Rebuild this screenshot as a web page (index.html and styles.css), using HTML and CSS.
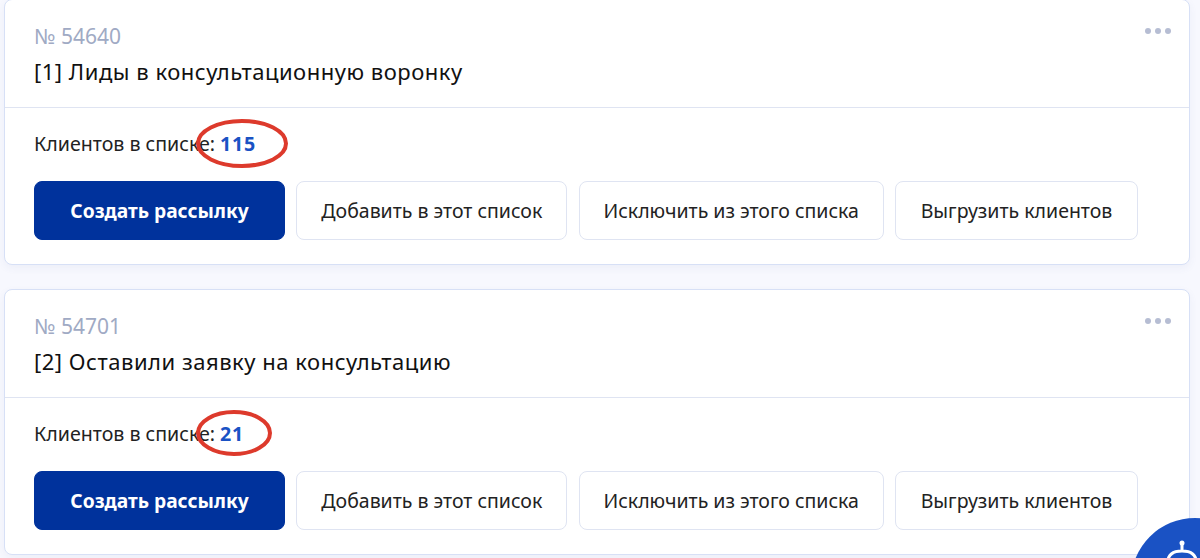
FILE: index.html
```html
<!DOCTYPE html>
<html lang="ru">
<head>
  <meta charset="UTF-8">
  <meta name="viewport" content="width=device-width, initial-scale=1.0">
  <title>Списки клиентов</title>
  <link rel="stylesheet" href="styles.css">
</head>
<body>
  <div class="list">
    <div class="card">
      <div class="card-head">
        <div class="card-num">№ 54640</div>
        <div class="card-title">[1] Лиды в консультационную воронку</div>
        <div class="dots"><i></i><i></i><i></i></div>
      </div>
      <div class="card-body">
        <div class="count">Клиентов в списке: <b>115</b>
          <svg class="circle circle-wide" viewBox="0 0 92 49"><ellipse cx="46" cy="24.5" rx="44" ry="22.5"/></svg>
        </div>
        <div class="actions">
          <a class="btn btn-main">Создать рассылку</a>
          <a class="btn btn-add">Добавить в этот список</a>
          <a class="btn btn-excl">Исключить из этого списка</a>
          <a class="btn btn-exp">Выгрузить клиентов</a>
        </div>
      </div>
    </div>

    <div class="card">
      <div class="card-head">
        <div class="card-num">№ 54701</div>
        <div class="card-title">[2] Оставили заявку на консультацию</div>
        <div class="dots"><i></i><i></i><i></i></div>
      </div>
      <div class="card-body">
        <div class="count">Клиентов в списке: <b>21</b>
          <svg class="circle circle-narrow" viewBox="0 0 76 46"><ellipse cx="38" cy="23" rx="36" ry="21"/></svg>
        </div>
        <div class="actions">
          <a class="btn btn-main">Создать рассылку</a>
          <a class="btn btn-add">Добавить в этот список</a>
          <a class="btn btn-excl">Исключить из этого списка</a>
          <a class="btn btn-exp">Выгрузить клиентов</a>
        </div>
      </div>
    </div>
  </div>

  <div class="bot">
    <svg viewBox="0 0 40 24" width="40" height="24"><circle class="bot-ball" cx="20" cy="5" r="2.5"/><path d="M20 7v6M6 24C6 16 12 13 20 13S34 16 34 24"/></svg>
  </div>
</body>
</html>
```

FILE: styles.css
```css
html, body { height: 100%; overflow: hidden; }
body { margin: 0; background: #f7f8fe; font-family: "Noto Sans", Arial, sans-serif; color: #111; }

.list { margin: -1px 10px 0 4px; display: flex; flex-direction: column; gap: 24px; }

.card { position: relative; height: 266px; box-sizing: border-box; background: #fff; border: 1px solid #d7e0f6; border-radius: 8px; box-shadow: 0 3px 8px rgba(60, 80, 150, .06); }

.card-head { position: relative; height: 108px; box-sizing: border-box; padding: 24px 29px 0; border-bottom: 1px solid #dfe4f2; }
.card-num { font-size: 21px; line-height: 24px; color: #a0aac4; }
.card-title { margin-top: 10px; font-size: 22px; line-height: 26px; letter-spacing: .52px; }

.dots { position: absolute; top: 28px; right: 18px; display: flex; gap: 4px; }
.dots i { width: 6px; height: 6px; border-radius: 50%; background: #b6bdd3; }

.card-body { padding: 24px 29px 0; }
.count { position: relative; width: max-content; font-size: 19.6px; line-height: 24px; color: #222; }
.count b { letter-spacing: .8px; color: #1a52c4; font-weight: 700; }

.circle { position: absolute; fill: none; stroke: #dd3a2c; stroke-width: 4; }
.circle-wide { left: 162px; top: -13px; width: 92px; height: 49px; }
.circle-narrow { left: 162px; top: -12px; width: 76px; height: 46px; }

.actions { display: flex; gap: 11.33px; margin-top: 25px; }
.btn { box-sizing: border-box; height: 59px; padding-bottom: 1px; display: flex; align-items: center; justify-content: center; background: #fff; border: 1px solid #dfe4f2; border-radius: 8px; font-size: 19.5px; color: #222; }
.btn-main { width: 251px; background: #00329c; border-color: #00329c; color: #fff; font-weight: 700; font-size: 19.2px; }
.btn-add { width: 271px; }
.btn-excl { width: 305px; }
.btn-exp { width: 243px; }

.bot { position: fixed; left: 1131px; top: 518px; width: 128px; height: 128px; border-radius: 50%; background: #1a52c4; }
.bot svg { position: absolute; left: 31px; top: 20px; fill: none; stroke: #fff; stroke-width: 3; }
.bot-ball { fill: #fff; stroke: none; }
```
